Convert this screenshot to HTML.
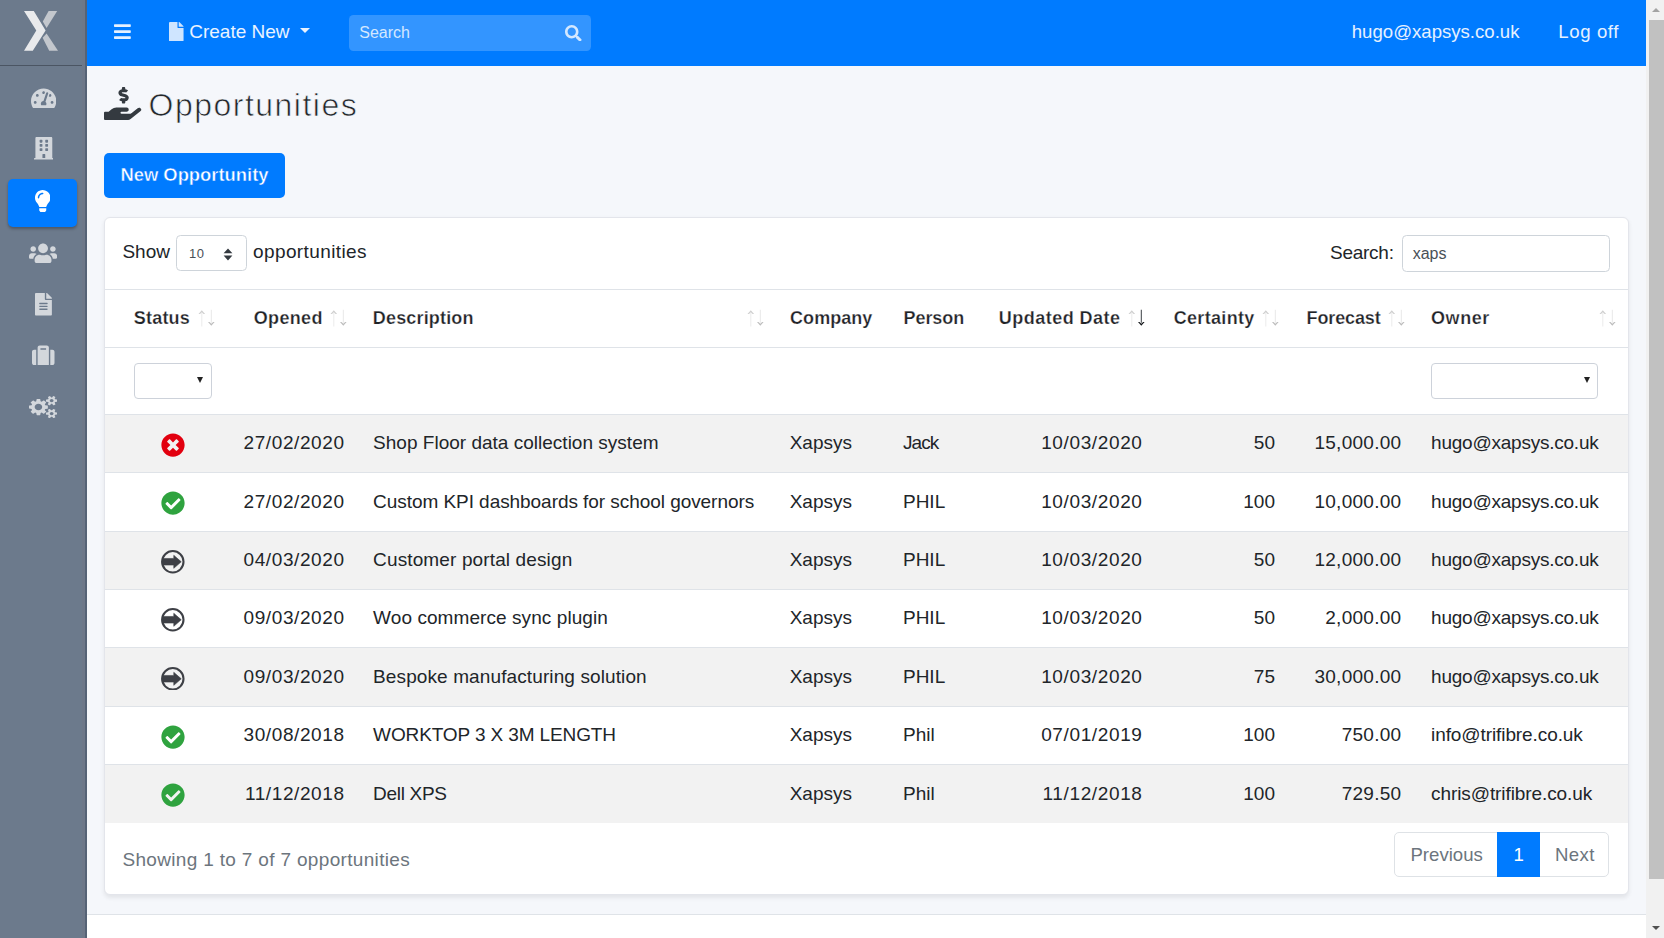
<!DOCTYPE html>
<html lang="en">
<head>
<meta charset="utf-8">
<title>Opportunities</title>
<style>
*{box-sizing:border-box}
html,body{margin:0;padding:0}
body{width:1664px;height:938px;overflow:hidden;position:relative;background:#f5f7fb;font-family:"Liberation Sans",sans-serif;font-size:19px;color:#212529}
.ico{display:block;position:relative}
a{text-decoration:none;color:inherit}
/* sidebar */
.sidebar{position:absolute;left:0;top:0;width:86.7px;height:938px;background:#6c7a8c}
.sidebar:after{content:"";position:absolute;right:0;top:0;width:5px;height:938px;background:linear-gradient(90deg,#6e7889 0,#6e7889 3.3px,#566376 3.3px)}
.brand{position:absolute;left:0;top:0;width:86.7px;height:66.4px;border-bottom:1.4px solid #4b5563}
.brand svg{position:absolute;left:0;top:0}
.nav-item{position:absolute;left:0;width:86.7px;display:block}
.nav-item .ico{margin:0 auto}
.nav-item.active{left:8.1px;width:69px;height:48px;background:#007bff;border-radius:5px;box-shadow:0 2px 3px rgba(0,0,0,.28)}
/* topbar */
.topbar{position:absolute;left:86.7px;top:0;width:1559.3px;height:65.8px;background:#007bff;color:#fff}
.topbar .abs{position:absolute;white-space:nowrap}
.toggler{left:27.7px;top:21.5px}
.create{left:82.5px;top:0;height:65.8px;line-height:64.4px;font-size:19px;color:#eaf3ff}
.create .ico{display:inline-block;vertical-align:-3px;margin-right:5.5px}
.caret{display:inline-block;width:0;height:0;border-left:5px solid transparent;border-right:5px solid transparent;border-top:5.4px solid #eaf3ff;margin-left:10.5px;vertical-align:4.6px}
.tsearch{left:262.3px;top:14.8px;width:241.6px;height:36.6px;border-radius:4.5px;background:#3395ff}
.tsearch span{position:absolute;left:10.3px;top:0;line-height:36.6px;font-size:16px;color:#d4e8ff}
.tsearch .ico{position:absolute;left:216px;top:10px}
.user{right:126.5px;top:0;line-height:64.4px;font-size:18.6px;color:#e6f1ff}
.logoff{right:26.9px;top:0;line-height:64.4px;font-size:18.6px;letter-spacing:.62px;color:#e6f1ff}
/* main */
h1{position:absolute;left:104.4px;top:80px;margin:0;height:46px;font-weight:400;font-size:32px;letter-spacing:1.48px;color:#23272b;white-space:nowrap}
h1 .ico{position:absolute;left:0;top:6.6px}
h1 span{position:absolute;left:44.2px;top:.4px;line-height:50px;-webkit-text-stroke:.7px #f5f7fb}
.btn-new{position:absolute;left:104.4px;top:153px;width:180.2px;height:45px;border-radius:5px;background:#007bff;color:#fff;font-weight:700;font-size:18.4px;line-height:44px;text-align:center;white-space:nowrap;-webkit-text-stroke:.45px #007bff}
.card{position:absolute;left:104.4px;top:216.6px;width:1524.2px;height:678.4px;background:#fff;border:1px solid #e3e5eb;border-radius:6px;box-shadow:0 2.3px 4.7px rgba(0,0,0,.075)}
.card .abs{position:absolute;white-space:nowrap}
.len-l{left:17px;top:16.2px;line-height:36px}
.len-sel{left:71.1px;top:17.9px;width:70.8px;height:36px;border:1px solid #ced4da;border-radius:4.5px;background:#fff}
.len-sel span{position:absolute;left:11.6px;top:1px;line-height:34px;font-size:13px;letter-spacing:.5px;color:#495057}
.len-sel svg{position:absolute;left:46px;top:11.6px}
.len-r{left:147.6px;top:16.2px;line-height:36px;letter-spacing:.4px}
.flt-l{left:1224.6px;top:17.4px;line-height:36px;letter-spacing:-.25px}
.flt-in{left:1297px;top:17.5px;width:208px;height:36.6px;border:1px solid #ced4da;border-radius:4.5px;background:#fff}
.flt-in span{position:absolute;left:9.3px;top:0;line-height:35px;font-size:16px;color:#495057}
.thead{left:0;top:71.7px;width:1522.2px;height:58.6px;border-top:1.3px solid #dfe3e8;border-bottom:1.6px solid #dfe3e8}
.th{position:absolute;top:0;line-height:56.6px;font-weight:700;font-size:18px;color:#1f2327;white-space:nowrap;-webkit-text-stroke:.25px #fff}
.sort{position:absolute;top:18.6px}
.fsel{height:36.3px;border:1px solid #cdd2da;border-radius:4px;background:#fff}
.fsel:after{content:"";position:absolute;right:7.6px;top:13.6px;border-left:3.9px solid transparent;border-right:3.9px solid transparent;border-top:6.8px solid #222}
.fs1{left:28.3px;top:145px;width:78.4px}
.fs2{left:1325.6px;top:145px;width:167.4px}
table{position:absolute;left:0;top:196.5px;width:1522.2px;border-collapse:collapse;table-layout:fixed}
td{height:58.33px;padding:0 0 .8px;border-top:1.3px solid #dfe3e8;white-space:nowrap;overflow:hidden;vertical-align:middle;font-size:19px;line-height:24px}
tr.odd td{background:#f2f2f2}
td.c-status .ico{margin:3.6px auto 0;left:7.1px}
td.c-date,td.c-upd,td.c-cert,td.c-fore{text-align:right}
td.c-date{padding-right:14.2px;letter-spacing:.6px}
td.c-desc{padding-left:14.3px}
td.c-co{padding-left:14.6px}
td.c-pe{padding-left:14.2px}
td.c-upd{padding-right:13.8px;letter-spacing:.63px}
td.c-cert{padding-right:14.9px}
td.c-fore{padding-right:14.4px;letter-spacing:.28px}
td.c-own{padding-left:15.2px;letter-spacing:-.23px}
.info{left:17px;top:622px;line-height:40px;font-size:19px;letter-spacing:.33px;color:#6c757d}
.pager{left:1288.7px;top:614.3px;height:45px;width:214.5px;border:1px solid #dee2e6;border-radius:5px;background:#fff;font-size:18.6px;color:#6c757d;line-height:43px}
.pager span{position:absolute;top:0}
.pager .cur{left:102.3px;top:-1px;width:42.6px;height:45px;background:#007bff;color:#fff;text-align:center;line-height:45px}
footer{position:absolute;left:86.7px;top:914px;width:1559.3px;height:24px;background:#fff;border-top:1.2px solid #dfe3e8}
/* scrollbar */
.sb{position:absolute;left:1646px;top:0;width:18px;height:938px;background:#f1f1f1}
.sb .thumb{position:absolute;left:2.8px;top:19.8px;width:15.2px;height:859.3px;background:#c1c1c1}
.sb .up{position:absolute;left:5.5px;top:7.6px;border-left:4.4px solid transparent;border-right:4.4px solid transparent;border-bottom:4.6px solid #a3a3a3}
.sb .dn{position:absolute;left:5.5px;top:925.8px;border-left:4.6px solid transparent;border-right:4.6px solid transparent;border-top:4.8px solid #505050}
</style>
</head>
<body>
<aside class="sidebar">
<a class="brand"><svg width="87" height="66" viewBox="0 0 87 66"><polygon fill="#e9eaec" points="24,11 33.8,11 45.6,30.6 32.8,50.7 24,50.7 36.3,30.6"/><polygon fill="#c3c7cd" points="48.6,11 57.2,11 46.6,28 42.8,21.6"/><polygon fill="#c3c7cd" points="46.6,33.4 58,50.7 49.2,50.7 42.6,37.8"/></svg></a>
<a class="nav-item" style="top:86.75px;height:22.5px"><svg class="ico" style="width:25.31px;height:22.5px;top:0" viewBox="0 0 576 512"><path fill="#d3d7dc" d="M288 32C128.94 32 0 160.94 0 320c0 52.8 14.25 102.26 39.06 144.8 5.61 9.62 16.3 15.2 27.44 15.2h443c11.14 0 21.83-5.58 27.44-15.2C561.75 422.26 576 372.8 576 320c0-159.06-128.94-288-288-288zm0 64c14.71 0 26.58 10.13 30.32 23.65-1.11 2.26-2.64 4.23-3.45 6.67l-9.22 27.67c-5.13 3.49-10.97 6.01-17.64 6.01-17.67 0-32-14.33-32-32S270.33 96 288 96zM96 384c-17.67 0-32-14.33-32-32s14.33-32 32-32 32 14.33 32 32-14.33 32-32 32zm48-160c-17.67 0-32-14.33-32-32s14.33-32 32-32 32 14.33 32 32-14.33 32-32 32zm246.77-72.41l-61.33 184C343.13 347.33 352 364.54 352 384c0 11.72-3.38 22.55-8.88 32H232.88c-5.5-9.45-8.88-20.28-8.88-32 0-33.94 26.5-61.43 59.9-63.59l61.34-184.01c4.170-12.560 17.730-19.450 30.360-15.170 12.570 4.190 19.350 17.790 15.170 30.360zm14.660 57.200l15.520-46.550c3.470-1.290 7.130-2.230 11.050-2.230 17.670 0 32 14.330 32 32s-14.330 32-32 32c-11.380-.01-20.890-6.280-26.570-15.220zM480 384c-17.670 0-32-14.330-32-32s14.330-32 32-32 32 14.330 32 32-14.330 32-32 32z"/></svg></a>
<a class="nav-item" style="top:137.45px;height:22.5px"><svg class="ico" style="width:19.69px;height:22.5px;top:0" viewBox="0 0 448 512"><path fill="#d3d7dc" d="M436 480h-20V24c0-13.255-10.745-24-24-24H56C42.745 0 32 10.745 32 24v456H12c-6.627 0-12 5.373-12 12v20h448v-20c0-6.627-5.373-12-12-12zM128 76c0-6.627 5.373-12 12-12h40c6.627 0 12 5.373 12 12v40c0 6.627-5.373 12-12 12h-40c-6.627 0-12-5.373-12-12V76zm0 96c0-6.627 5.373-12 12-12h40c6.627 0 12 5.373 12 12v40c0 6.627-5.373 12-12 12h-40c-6.627 0-12-5.373-12-12v-40zm52 148h-40c-6.627 0-12-5.373-12-12v-40c0-6.627 5.373-12 12-12h40c6.627 0 12 5.373 12 12v40c0 6.627-5.373 12-12 12zm76 160h-64v-84c0-6.627 5.373-12 12-12h40c6.627 0 12 5.373 12 12v84zm64-172c0 6.627-5.373 12-12 12h-40c-6.627 0-12-5.373-12-12v-40c0-6.627 5.373-12 12-12h40c6.627 0 12 5.373 12 12v40zm0-96c0 6.627-5.373 12-12 12h-40c-6.627 0-12-5.373-12-12v-40c0-6.627 5.373-12 12-12h40c6.627 0 12 5.373 12 12v40zm0-96c0 6.627-5.373 12-12 12h-40c-6.627 0-12-5.373-12-12V76c0-6.627 5.373-12 12-12h40c6.627 0 12 5.373 12 12v40z"/></svg></a>
<a class="nav-item active" style="top:178.9px"><svg class="ico" style="width:15.47px;height:22.5px;top:10.75px" viewBox="0 0 352 512"><path fill="#fff" d="M96.06 454.35c.01 6.29 1.87 12.45 5.36 17.69l17.09 25.69a31.99 31.99 0 0 0 26.64 14.28h61.71a31.99 31.99 0 0 0 26.64-14.28l17.09-25.69a31.989 31.989 0 0 0 5.36-17.69l.04-38.35H96.01l.05 38.35zM0 176c0 44.37 16.45 84.85 43.56 115.78 16.52 18.85 42.36 58.23 52.21 91.45.04.26.07.52.11.78h160.24c.04-.26.07-.51.11-.78 9.85-33.22 35.69-72.6 52.21-91.45C335.55 260.85 352 220.37 352 176 352 78.61 272.91-.3 175.45 0 73.44.31 0 82.97 0 176zm176-80c-44.11 0-80 35.89-80 80 0 8.84-7.16 16-16 16s-16-7.16-16-16c0-61.76 50.24-112 112-112 8.84 0 16 7.16 16 16s-7.16 16-16 16z"/></svg></a>
<a class="nav-item" style="top:241.85px;height:22.5px"><svg class="ico" style="width:28.12px;height:22.5px;top:0" viewBox="0 0 640 512"><path fill="#d3d7dc" d="M96 224c35.3 0 64-28.7 64-64s-28.7-64-64-64-64 28.7-64 64 28.7 64 64 64zm448 0c35.3 0 64-28.7 64-64s-28.7-64-64-64-64 28.7-64 64 28.7 64 64 64zm32 32h-64c-17.6 0-33.5 7.1-45.1 18.6 40.3 22.1 68.9 62 75.1 109.400h66c17.700 0 32-14.300 32-32v-32c0-35.300-28.700-64-64-64zm-256 0c61.900 0 112-50.100 112-112S381.900 32 320 32 208 82.100 208 144s50.100 112 112 112zm76.800 32h-8.300c-20.800 10-43.900 16-68.500 16s-47.600-6-68.500-16h-8.300C179.600 288 128 339.600 128 403.200V432c0 26.500 21.500 48 48 48h288c26.500 0 48-21.500 48-48v-28.800c0-63.600-51.600-115.200-115.200-115.200zm-223.700-13.400C161.500 263.100 145.600 256 128 256H64c-35.300 0-64 28.700-64 64v32c0 17.700 14.300 32 32 32h65.900c6.300-47.400 34.900-87.300 75.200-109.400z"/></svg></a>
<a class="nav-item" style="top:293.15px;height:22.5px"><svg class="ico" style="width:16.88px;height:22.5px;top:0" viewBox="0 0 384 512"><path fill="#d3d7dc" d="M224 136V0H24C10.7 0 0 10.7 0 24v464c0 13.3 10.7 24 24 24h336c13.3 0 24-10.7 24-24V160H248c-13.2 0-24-10.8-24-24zm64 236c0 6.6-5.4 12-12 12H108c-6.6 0-12-5.4-12-12v-8c0-6.600 5.400-12 12-12h168c6.600 0 12 5.400 12 12v8zm0-64c0 6.600-5.400 12-12 12H108c-6.600 0-12-5.400-12-12v-8c0-6.600 5.400-12 12-12h168c6.600 0 12 5.400 12 12v8zm0-72v8c0 6.600-5.400 12-12 12H108c-6.600 0-12-5.400-12-12v-8c0-6.600 5.400-12 12-12h168c6.600 0 12 5.400 12 12zm96-114.100v6.100H256V0h6.100c6.400 0 12.500 2.500 17 7l97.900 98c4.500 4.500 7 10.600 7 16.900z"/></svg></a>
<a class="nav-item" style="top:344.05px;height:22.5px"><svg class="ico" style="width:22.50px;height:22.5px;top:0" viewBox="0 0 512 512"><path fill="#d3d7dc" d="M128 480h256V80c0-26.500-21.500-48-48-48H176c-26.500 0-48 21.500-48 48v400zm64-384h128v32H192V96zm320 80v256c0 26.500-21.500 48-48 48h-48V128h48c26.500 0 48 21.500 48 48zM96 480H48c-26.500 0-48-21.500-48-48V176c0-26.500 21.500-48 48-48h48v352z"/></svg></a>
<a class="nav-item" style="top:395.75px;height:22.5px"><svg class="ico" style="width:28.3px;height:22.2px;top:0.1px" preserveAspectRatio="none" viewBox="0 -1520 1920 1761"><path fill="#d3d7dc" transform="scale(1,-1)" d="M896 640q0 106 -75 181t-181 75t-181 -75t-75 -181t75 -181t181 -75t181 75t75 181zM1664 128q0 52 -38 90t-90 38t-90 -38t-38 -90q0 -53 37.5 -90.5t90.5 -37.5t90.5 37.5t37.5 90.5zM1664 1152q0 52 -38 90t-90 38t-90 -38t-38 -90q0 -53 37.5 -90.5t90.5 -37.5 t90.5 37.5t37.5 90.5zM1280 731v-185q0 -10 -7 -19.5t-16 -10.5l-155 -24q-11 -35 -32 -76q34 -48 90 -115q7 -11 7 -20q0 -12 -7 -19q-23 -30 -82.5 -89.5t-78.5 -59.5q-11 0 -21 7l-115 90q-37 -19 -77 -31q-11 -108 -23 -155q-7 -24 -30 -24h-186q-11 0 -20 7.5t-10 17.5 l-23 153q-34 10 -75 31l-118 -89q-7 -7 -20 -7q-11 0 -21 8q-144 133 -144 160q0 9 7 19q10 14 41 53t47 61q-23 44 -35 82l-152 24q-10 1 -17 9.5t-7 19.5v185q0 10 7 19.5t16 10.5l155 24q11 35 32 76q-34 48 -90 115q-7 11 -7 20q0 12 7 20q22 30 82 89t79 59q11 0 21 -7 l115 -90q34 18 77 32q11 108 23 154q7 24 30 24h186q11 0 20 -7.5t10 -17.5l23 -153q34 -10 75 -31l118 89q8 7 20 7q11 0 21 -8q144 -133 144 -160q0 -8 -7 -19q-12 -16 -42 -54t-45 -60q23 -48 34 -82l152 -23q10 -2 17 -10.5t7 -19.5zM1920 198v-140q0 -16 -149 -31 q-12 -27 -30 -52q51 -113 51 -138q0 -4 -4 -7q-122 -71 -124 -71q-8 0 -46 47t-52 68q-20 -2 -30 -2t-30 2q-14 -21 -52 -68t-46 -47q-2 0 -124 71q-4 3 -4 7q0 25 51 138q-18 25 -30 52q-149 15 -149 31v140q0 16 149 31q13 29 30 52q-51 113 -51 138q0 4 4 7q4 2 35 20 t59 34t30 16q8 0 46 -46.5t52 -67.5q20 2 30 2t30 -2q51 71 92 112l6 2q4 0 124 -70q4 -3 4 -7q0 -25 -51 -138q17 -23 30 -52q149 -15 149 -31zM1920 1222v-140q0 -16 -149 -31q-12 -27 -30 -52q51 -113 51 -138q0 -4 -4 -7q-122 -71 -124 -71q-8 0 -46 47t-52 68 q-20 -2 -30 -2t-30 2q-14 -21 -52 -68t-46 -47q-2 0 -124 71q-4 3 -4 7q0 25 51 138q-18 25 -30 52q-149 15 -149 31v140q0 16 149 31q13 29 30 52q-51 113 -51 138q0 4 4 7q4 2 35 20t59 34t30 16q8 0 46 -46.5t52 -67.5q20 2 30 2t30 -2q51 71 92 112l6 2q4 0 124 -70 q4 -3 4 -7q0 -25 -51 -138q17 -23 30 -52q149 -15 149 -31z"/></svg></a>
</aside>
<header class="topbar">
<a class="abs toggler"><svg class="ico" style="width:16.80px;height:19.2px;" viewBox="0 0 448 512"><path fill="#e6f1ff" d="M16 132h416c8.837 0 16-7.163 16-16V76c0-8.837-7.163-16-16-16H16C7.163 60 0 67.163 0 76v40c0 8.837 7.163 16 16 16zm0 160h416c8.837 0 16-7.163 16-16v-40c0-8.837-7.163-16-16-16H16c-8.837 0-16 7.163-16 16v40c0 8.837 7.163 16 16 16zm0 160h416c8.837 0 16-7.163 16-16v-40c0-8.837-7.163-16-16-16H16c-8.837 0-16 7.163-16 16v40c0 8.837 7.163 16 16 16z"/></svg></a>
<a class="abs create"><svg class="ico" style="width:14.55px;height:19.4px;" viewBox="0 0 384 512"><path fill="#cfe5ff" d="M224 136V0H24C10.7 0 0 10.7 0 24v464c0 13.3 10.7 24 24 24h336c13.3 0 24-10.7 24-24V160H248c-13.2 0-24-10.8-24-24zm160-14.100v6.100H256V0h6.100c6.400 0 12.500 2.500 17 7l97.900 98c4.500 4.500 7 10.600 7 16.900z"/></svg>Create New<i class="caret"></i></a>
<div class="abs tsearch"><span>Search</span><svg class="ico" style="width:16.60px;height:16.6px;" viewBox="0 0 512 512"><path fill="#d4e8ff" d="M505 442.700L405.300 343c-4.500-4.500-10.600-7-17-7H372c27.600-35.300 44-79.700 44-128C416 93.100 322.900 0 208 0S0 93.100 0 208s93.100 208 208 208c48.300 0 92.700-16.400 128-44v16.300c0 6.400 2.500 12.500 7 17l99.700 99.700c9.400 9.400 24.600 9.400 33.900 0l28.300-28.300c9.400-9.400 9.400-24.600.1-34zM208 336c-70.700 0-128-57.200-128-128 0-70.700 57.200-128 128-128 70.700 0 128 57.200 128 128 0 70.700-57.200 128-128 128z"/></svg></div>
<a class="abs user">hugo@xapsys.co.uk</a>
<a class="abs logoff">Log off</a>
</header>
<main>
<h1><svg class="ico" style="width:37.12px;height:33px;" viewBox="0 0 576 512"><path fill="#343a40" d="M271.06,144.3l54.27,14.3a8.59,8.59,0,0,1,6.63,8.1c0,4.6-4.09,8.4-9.12,8.4h-35.6a30,30,0,0,1-11.19-2.2c-5.24-2.2-11.28-1.7-15.3,2l-19,17.5a11.68,11.68,0,0,0-2.25,2.66,11.42,11.42,0,0,0,3.88,15.74,83.77,83.77,0,0,0,34.51,11.5V240c0,8.8,7.83,16,17.37,16h17.37c9.55,0,17.38-7.2,17.38-16V222.4c32.93-3.6,57.84-31,53.5-63-3.15-23-22.46-41.3-46.56-47.7L282.68,97.4a8.59,8.59,0,0,1-6.63-8.1c0-4.6,4.09-8.4,9.12-8.4h35.6A30,30,0,0,1,332,83.1c5.23,2.2,11.28,1.7,15.3-2l19-17.5A11.31,11.31,0,0,0,368.47,61a11.43,11.43,0,0,0-3.84-15.78,83.82,83.82,0,0,0-34.52-11.5V16c0-8.8-7.82-16-17.37-16H295.37C285.82,0,278,7.2,278,16V33.6c-32.89,3.6-57.85,31-53.51,63C227.63,119.6,247,137.9,271.06,144.3ZM565.27,328.1c-11.8-10.7-30.2-10-42.6,0L430.27,402a63.64,63.64,0,0,1-40,14H272a16,16,0,0,1,0-32h78.29c15.9,0,30.71-10.9,33.25-26.6a31.2,31.2,0,0,0,.46-5.46A32,32,0,0,0,352,320H192a117.66,117.66,0,0,0-74.1,26.29L71.4,384H16A16,16,0,0,0,0,400v96a16,16,0,0,0,16,16H372.77a64,64,0,0,0,40-14L564,377a32,32,0,0,0,1.28-48.9Z"/></svg><span>Opportunities</span></h1>
<a class="btn-new">New Opportunity</a>
<section class="card">
<label class="abs len-l">Show</label>
<div class="abs len-sel"><span>10</span><svg width="10" height="13" viewBox="0 0 10 13"><path fill="#343a40" d="M5 0.4L9.4 5.2H0.6zM5 12.4L0.6 7.6H9.4z"/></svg></div>
<label class="abs len-r">opportunities</label>
<label class="abs flt-l">Search:</label>
<div class="abs flt-in"><span>xaps</span></div>
<div class="abs thead"><span class="th h-status" style="left:28.3px;letter-spacing:0.23px">Status</span><svg class="sort" style="left:92.9px" width="18" height="18" viewBox="0 0 18 18"><path fill="#ebebeb" d="M3.3 4h1v13.5h-1z"/><path fill="#cfcfcf" d="M3.8 1.3L7.1 5H5.6L3.8 3.2L2 5H.5z"/><path fill="#e8e8e8" d="M12.8 .8h1v13h-1z"/><path fill="#bdbdbd" d="M13.3 16.8L10 12.9h1.5l1.8 1.9l1.8-1.9h1.5z"/></svg><span class="th h-opened" style="left:148.4px;letter-spacing:0.33px">Opened</span><svg class="sort" style="left:224.4px" width="18" height="18" viewBox="0 0 18 18"><path fill="#ebebeb" d="M3.3 4h1v13.5h-1z"/><path fill="#cfcfcf" d="M3.8 1.3L7.1 5H5.6L3.8 3.2L2 5H.5z"/><path fill="#e8e8e8" d="M12.8 .8h1v13h-1z"/><path fill="#bdbdbd" d="M13.3 16.8L10 12.9h1.5l1.8 1.9l1.8-1.9h1.5z"/></svg><span class="th h-description" style="left:267.4px;letter-spacing:0.17px">Description</span><svg class="sort" style="left:641.3px" width="18" height="18" viewBox="0 0 18 18"><path fill="#ebebeb" d="M3.3 4h1v13.5h-1z"/><path fill="#cfcfcf" d="M3.8 1.3L7.1 5H5.6L3.8 3.2L2 5H.5z"/><path fill="#e8e8e8" d="M12.8 .8h1v13h-1z"/><path fill="#bdbdbd" d="M13.3 16.8L10 12.9h1.5l1.8 1.9l1.8-1.9h1.5z"/></svg><span class="th h-company" style="left:684.7px;letter-spacing:0.03px">Company</span><span class="th h-person" style="left:798.2px;letter-spacing:-0.09px">Person</span><span class="th h-updated" style="left:893.4px;letter-spacing:0.48px">Updated Date</span><svg class="sort" style="left:1022.9px" width="18" height="18" viewBox="0 0 18 18"><path fill="#ebebeb" d="M3.3 4h1v13.5h-1z"/><path fill="#cfcfcf" d="M3.8 1.3L7.1 5H5.6L3.8 3.2L2 5H.5z"/><path fill="#3a3f44" d="M12.8 .8h1v13h-1z"/><path fill="#14171a" d="M13.3 16.8L10 12.9h1.5l1.8 1.9l1.8-1.9h1.5z"/></svg><span class="th h-certainty" style="left:1068.3px;letter-spacing:0.33px">Certainty</span><svg class="sort" style="left:1156.6px" width="18" height="18" viewBox="0 0 18 18"><path fill="#ebebeb" d="M3.3 4h1v13.5h-1z"/><path fill="#cfcfcf" d="M3.8 1.3L7.1 5H5.6L3.8 3.2L2 5H.5z"/><path fill="#e8e8e8" d="M12.8 .8h1v13h-1z"/><path fill="#bdbdbd" d="M13.3 16.8L10 12.9h1.5l1.8 1.9l1.8-1.9h1.5z"/></svg><span class="th h-forecast" style="left:1201.2px;letter-spacing:-0.13px">Forecast</span><svg class="sort" style="left:1282.9px" width="18" height="18" viewBox="0 0 18 18"><path fill="#ebebeb" d="M3.3 4h1v13.5h-1z"/><path fill="#cfcfcf" d="M3.8 1.3L7.1 5H5.6L3.8 3.2L2 5H.5z"/><path fill="#e8e8e8" d="M12.8 .8h1v13h-1z"/><path fill="#bdbdbd" d="M13.3 16.8L10 12.9h1.5l1.8 1.9l1.8-1.9h1.5z"/></svg><span class="th h-owner" style="left:1325.6px;letter-spacing:0.59px">Owner</span><svg class="sort" style="left:1493.4px" width="18" height="18" viewBox="0 0 18 18"><path fill="#ebebeb" d="M3.3 4h1v13.5h-1z"/><path fill="#cfcfcf" d="M3.8 1.3L7.1 5H5.6L3.8 3.2L2 5H.5z"/><path fill="#e8e8e8" d="M12.8 .8h1v13h-1z"/><path fill="#bdbdbd" d="M13.3 16.8L10 12.9h1.5l1.8 1.9l1.8-1.9h1.5z"/></svg></div>
<div class="abs fsel fs1"></div>
<div class="abs fsel fs2"></div>
<table>
<colgroup><col style="width:121.8px"><col style="width:131.6px"><col style="width:416.3px"><col style="width:113.7px"><col style="width:94.6px"><col style="width:173px"><col style="width:133.5px"><col style="width:126px"><col style="width:211.7px"></colgroup>
<tbody>
<tr class="odd">
<td class="c-status"><svg class="ico" style="width:24.00px;height:24px;" viewBox="0 0 512 512"><path fill="#e2000f" d="M256 8C119 8 8 119 8 256s111 248 248 248 248-111 248-248S393 8 256 8zm121.600 313.100c4.700 4.700 4.700 12.300 0 17L338 377.600c-4.700 4.700-12.300 4.700-17 0L256 312l-65.100 65.600c-4.700 4.700-12.300 4.700-17 0L134.400 338c-4.700-4.700-4.700-12.300 0-17l65.600-65-65.600-65.100c-4.700-4.700-4.700-12.300 0-17l39.600-39.600c4.700-4.700 12.300-4.700 17 0l65 65.700 65.100-65.600c4.700-4.700 12.300-4.700 17 0l39.600 39.600c4.700 4.700 4.700 12.300 0 17L312 256l65.600 65.100z"/></svg></td><td class="c-date">27/02/2020</td><td class="c-desc"><span style="letter-spacing:0.01px">Shop Floor data collection system</span></td><td class="c-co">Xapsys</td><td class="c-pe"><span style="letter-spacing:-.9px">Jack</span></td><td class="c-upd">10/03/2020</td><td class="c-cert">50</td><td class="c-fore">15,000.00</td><td class="c-own">hugo@xapsys.co.uk</td></tr>
<tr class="even">
<td class="c-status"><svg class="ico" style="width:24.00px;height:24px;" viewBox="0 0 512 512"><path fill="#2fa33f" d="M504 256c0 136.967-111.033 248-248 248S8 392.967 8 256 119.033 8 256 8s248 111.033 248 248zM227.314 387.314l184-184c6.248-6.248 6.248-16.379 0-22.627l-22.627-22.627c-6.248-6.249-16.379-6.249-22.628 0L216 308.118l-70.059-70.059c-6.248-6.248-16.379-6.248-22.628 0l-22.627 22.627c-6.248 6.248-6.248 16.379 0 22.627l104 104c6.249 6.249 16.379 6.249 22.628.001z"/></svg></td><td class="c-date">27/02/2020</td><td class="c-desc"><span style="letter-spacing:-0.055px">Custom KPI dashboards for school governors</span></td><td class="c-co">Xapsys</td><td class="c-pe">PHIL</td><td class="c-upd">10/03/2020</td><td class="c-cert">100</td><td class="c-fore">10,000.00</td><td class="c-own">hugo@xapsys.co.uk</td></tr>
<tr class="odd">
<td class="c-status"><svg class="ico" style="width:23.6px;height:23.6px;left:6.5px" viewBox="0 0 24 24"><circle cx="12" cy="12" r="10.9" fill="none" stroke="#3e4046" stroke-width="2.1"/><path fill="#3e4046" stroke="#3e4046" stroke-width=".6" stroke-linejoin="round" d="M1.7 8.6H13V5.4L20.6 12L13 18.6V15.3H1.7z"/></svg></td><td class="c-date">04/03/2020</td><td class="c-desc"><span style="letter-spacing:0.13px">Customer portal design</span></td><td class="c-co">Xapsys</td><td class="c-pe">PHIL</td><td class="c-upd">10/03/2020</td><td class="c-cert">50</td><td class="c-fore">12,000.00</td><td class="c-own">hugo@xapsys.co.uk</td></tr>
<tr class="even">
<td class="c-status"><svg class="ico" style="width:23.6px;height:23.6px;left:6.5px" viewBox="0 0 24 24"><circle cx="12" cy="12" r="10.9" fill="none" stroke="#3e4046" stroke-width="2.1"/><path fill="#3e4046" stroke="#3e4046" stroke-width=".6" stroke-linejoin="round" d="M1.7 8.6H13V5.4L20.6 12L13 18.6V15.3H1.7z"/></svg></td><td class="c-date">09/03/2020</td><td class="c-desc"><span style="letter-spacing:0.075px">Woo commerce sync plugin</span></td><td class="c-co">Xapsys</td><td class="c-pe">PHIL</td><td class="c-upd">10/03/2020</td><td class="c-cert">50</td><td class="c-fore">2,000.00</td><td class="c-own">hugo@xapsys.co.uk</td></tr>
<tr class="odd">
<td class="c-status"><svg class="ico" style="width:23.6px;height:23.6px;left:6.5px" viewBox="0 0 24 24"><circle cx="12" cy="12" r="10.9" fill="none" stroke="#3e4046" stroke-width="2.1"/><path fill="#3e4046" stroke="#3e4046" stroke-width=".6" stroke-linejoin="round" d="M1.7 8.6H13V5.4L20.6 12L13 18.6V15.3H1.7z"/></svg></td><td class="c-date">09/03/2020</td><td class="c-desc"><span style="letter-spacing:0.11px">Bespoke manufacturing solution</span></td><td class="c-co">Xapsys</td><td class="c-pe">PHIL</td><td class="c-upd">10/03/2020</td><td class="c-cert">75</td><td class="c-fore">30,000.00</td><td class="c-own">hugo@xapsys.co.uk</td></tr>
<tr class="even">
<td class="c-status"><svg class="ico" style="width:24.00px;height:24px;" viewBox="0 0 512 512"><path fill="#2fa33f" d="M504 256c0 136.967-111.033 248-248 248S8 392.967 8 256 119.033 8 256 8s248 111.033 248 248zM227.314 387.314l184-184c6.248-6.248 6.248-16.379 0-22.627l-22.627-22.627c-6.248-6.249-16.379-6.249-22.628 0L216 308.118l-70.059-70.059c-6.248-6.248-16.379-6.248-22.628 0l-22.627 22.627c-6.248 6.248-6.248 16.379 0 22.627l104 104c6.249 6.249 16.379 6.249 22.628.001z"/></svg></td><td class="c-date">30/08/2018</td><td class="c-desc"><span style="letter-spacing:-0.115px">WORKTOP 3 X 3M LENGTH</span></td><td class="c-co">Xapsys</td><td class="c-pe">Phil</td><td class="c-upd">07/01/2019</td><td class="c-cert">100</td><td class="c-fore">750.00</td><td class="c-own"><span style="letter-spacing:-.09px">info@trifibre.co.uk</span></td></tr>
<tr class="odd">
<td class="c-status"><svg class="ico" style="width:24.00px;height:24px;" viewBox="0 0 512 512"><path fill="#2fa33f" d="M504 256c0 136.967-111.033 248-248 248S8 392.967 8 256 119.033 8 256 8s248 111.033 248 248zM227.314 387.314l184-184c6.248-6.248 6.248-16.379 0-22.627l-22.627-22.627c-6.248-6.249-16.379-6.249-22.628 0L216 308.118l-70.059-70.059c-6.248-6.248-16.379-6.248-22.628 0l-22.627 22.627c-6.248 6.248-6.248 16.379 0 22.627l104 104c6.249 6.249 16.379 6.249 22.628.001z"/></svg></td><td class="c-date">11/12/2018</td><td class="c-desc"><span style="letter-spacing:-0.3px">Dell XPS</span></td><td class="c-co">Xapsys</td><td class="c-pe">Phil</td><td class="c-upd">11/12/2018</td><td class="c-cert">100</td><td class="c-fore">729.50</td><td class="c-own"><span style="letter-spacing:-.09px">chris@trifibre.co.uk</span></td></tr>
</tbody>
</table>
<div class="abs info">Showing 1 to 7 of 7 opportunities</div>
<div class="abs pager"><span style="left:15.4px">Previous</span><span class="cur">1</span><span style="left:160px;letter-spacing:.35px">Next</span></div>
</section>
</main>
<footer></footer>
<div class="sb"><i class="up"></i><div class="thumb"></div><i class="dn"></i></div>
</body>
</html>
